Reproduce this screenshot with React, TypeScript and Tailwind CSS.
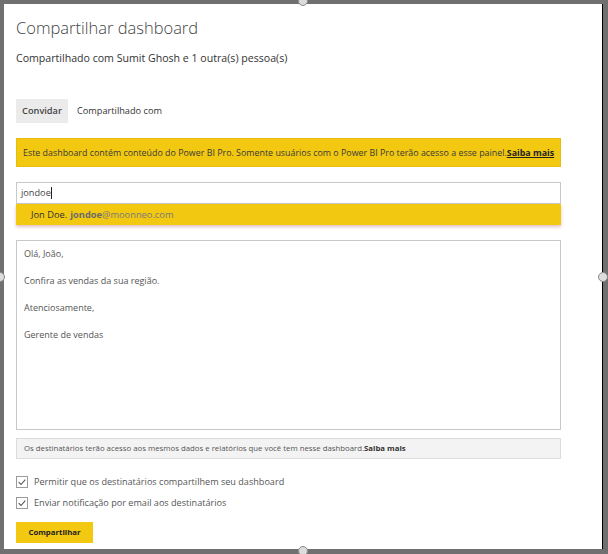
const Check = () => (
  <svg viewBox="0 0 12 12" className="w-[12px] h-[12px] shrink-0">
    <rect x="0.5" y="0.5" width="11" height="11" fill="white" stroke="#9a9a9a" />
    <path d="M2.7 6.2 L5 8.5 L9.3 3.6" fill="none" stroke="#555" strokeWidth="1.1" />
  </svg>
)

const Handle = ({ className }: { className: string }) => (
  <div className={`absolute w-[10px] h-[10px] rounded-full border border-[#8a8a8a] bg-[#dcdcdc] ${className}`} />
)

export default function App() {
  return (
    <div className="relative w-[608px] h-[554px] bg-[#707070] pt-[4px] pl-[4px] pr-[5px] pb-[5px] font-['Segoe_UI','Open_Sans',sans-serif]">
      <div className="h-full bg-white border-r border-black pl-[12px] pr-[41px] flex flex-col">
        {/* Header */}
        <h1 className="mt-[12px] text-[16.5px] leading-[24px] text-[#444] font-light">Compartilhar dashboard</h1>
        <p className="mt-[10px] text-[10.6px] leading-[16px] text-[#333]">
          Compartilhado com Sumit Ghosh e 1 outra(s) pessoa(s)
        </p>

        {/* Tabs */}
        <div className="mt-[33px] flex items-center text-[9.2px]">
          <div className="h-[24px] w-[52px] flex items-center justify-center bg-[#ebebeb] font-semibold text-[#444]">Convidar</div>
          <div className="ml-[9px] text-[#333]">Compartilhado com</div>
        </div>

        {/* Pro banner */}
        <div className="mt-[15px] h-[29px] bg-[#f2c811] border border-[#e6bd0c] flex items-center px-[6px] text-[8.9px] text-[#3a3a3a] whitespace-nowrap">
          Este dashboard contém conteúdo do Power BI Pro. Somente usuários com o Power BI Pro terão acesso a esse painel.
          <a className="font-bold underline text-[#222]">Saiba mais</a>
        </div>

        {/* Recipient input + suggestion */}
        <div className="mt-[15px]">
          <div className="h-[22px] border border-[#c8c8c8] flex items-center px-[4px] text-[9.2px] text-[#444]">
            jondoe<span className="inline-block w-px h-[12px] bg-[#222]" />
          </div>
          <div className="h-[21px] bg-[#f2c811] flex items-center pl-[15px] text-[9.3px] shadow-[0_2px_3px_rgba(190,120,120,0.45)]">
            <span className="text-[#333]">Jon Doe.</span>
            <span className="ml-[3px] font-bold text-[#6b6b6b]">jondoe</span>
            <span className="text-[#7a7a7a]">@moonneo.com</span>
          </div>
        </div>

        {/* Message */}
        <div className="mt-[15px] h-[190px] border border-[#c8c8c8] px-[7px] pt-[6px] text-[9px] text-[#555] flex flex-col gap-[13px] leading-[14px]">
          <p>Olá, João,</p>
          <p>Confira as vendas da sua região.</p>
          <p>Atenciosamente,</p>
          <p>Gerente de vendas</p>
        </div>

        {/* Info */}
        <div className="mt-[8px] h-[21px] bg-[#f3f3f3] border border-[#dcdcdc] flex items-center px-[7px] text-[7.8px] text-[#555] whitespace-nowrap">
          Os destinatários terão acesso aos mesmos dados e relatórios que você tem nesse dashboard.
          <span className="font-bold text-[#333]">Saiba mais</span>
        </div>

        {/* Options */}
        <div className="mt-[17px] flex flex-col gap-[9px] text-[9.1px] text-[#555]">
          <label className="flex items-center gap-[6px] h-[12px]">
            <Check />
            Permitir que os destinatários compartilhem seu dashboard
          </label>
          <label className="flex items-center gap-[6px] h-[12px]">
            <Check />
            Enviar notificação por email aos destinatários
          </label>
        </div>

        <div className="mt-[13px] flex">
          <button className="w-[77px] h-[21px] bg-[#f2c811] text-[7.8px] font-bold text-[#222]">Compartilhar</button>
        </div>
      </div>

      {/* resize handles */}
      <Handle className="left-[298px] -top-[4px]" />
      <Handle className="-left-[5px] top-[272px]" />
      <Handle className="left-[598px] top-[272px]" />
      <Handle className="left-[298px] top-[546px]" />
    </div>
  )
}
